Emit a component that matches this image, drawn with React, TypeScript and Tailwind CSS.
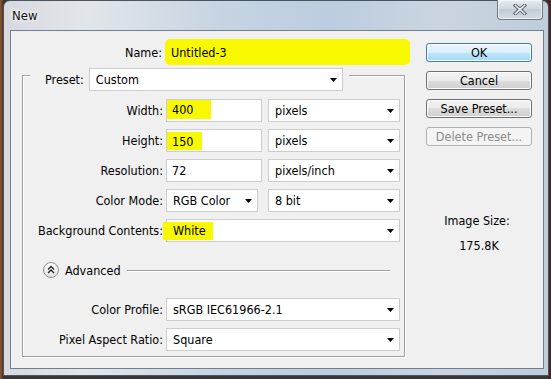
import React from "react";

function Arrow() {
  return (
    <svg width="7" height="4" viewBox="0 0 7 4" className="shrink-0">
      <path d="M0 0H7L3.5 4Z" fill="#000" />
    </svg>
  );
}

function Select({ w, children }: { w: string; children: React.ReactNode }) {
  return (
    <div className={`flex h-[23px] items-center justify-between border border-[#cdcdcd] bg-white pl-[6px] pr-[5px] ${w}`}>
      <span className="flex items-center">{children}</span>
      <Arrow />
    </div>
  );
}

function Row({ label, children }: { label: string; children: React.ReactNode }) {
  return (
    <div className="flex h-[23px] items-center">
      <div className="w-[140px] text-right">{label}</div>
      <div className="ml-[3px] flex items-center">{children}</div>
    </div>
  );
}

function Btn({ children, kind }: { children: React.ReactNode; kind?: "default" | "disabled" }) {
  if (kind === "default")
    return (
      <div className="flex h-[19px] items-center justify-center rounded-[3px] border border-[#3c7fb1] bg-[linear-gradient(#eaf6fd_0%,#d9f0fc_50%,#bee6fd_50%,#a7d9f5_100%)] shadow-[inset_0_0_0_1px_#fbfdfe]">
        {children}
      </div>
    );
  if (kind === "disabled")
    return (
      <div className="flex h-[19px] items-center justify-center rounded-[3px] border border-[#adb2b5] bg-[#f4f4f4] text-[#8b8b8b]">
        {children}
      </div>
    );
  return (
    <div className="flex h-[19px] items-center justify-center rounded-[3px] border border-[#707070] bg-[linear-gradient(#f2f2f2_0%,#ebebeb_50%,#dddddd_50%,#cfcfcf_100%)] shadow-[inset_0_0_0_1px_#fcfcfc]">
      {children}
    </div>
  );
}

export default function App() {
  return (
    <div className="h-[379px] w-[551px] overflow-hidden bg-[linear-gradient(90deg,#8d5a32_0px,#5a3020_3px,#3a3636_3px,#3a3636_548px,#4a2222_548px)] font-['DejaVu_Sans_Condensed','DejaVu_Sans',sans-serif] text-[12.5px] leading-[15px] text-black">
      {/* window */}
      <div className="ml-[3px] flex h-[376px] w-[546px] flex-col rounded-t-[7px] border border-[#4a5560] bg-[linear-gradient(90deg,#d6dadf_0%,#e2e6ea_15%,#c6d4e2_40%,#bccddf_60%,#cad5e0_80%,#bfccda_100%)]">
        {/* title bar */}
        <div className="flex h-[29px] items-start justify-between">
          <span className="pl-[8px] pt-[7px] text-[13px] text-[#111] [text-shadow:0_0_6px_#fff,0_0_3px_#fff]">New</span>
          <div className="-mt-px mr-[5px] flex h-[20px] w-[46px] items-center justify-center rounded-b-[4px] border border-t-0 border-[#6e7a86] bg-[linear-gradient(#e8ecf0,#cdd5de_50%,#c2ccd7_50%,#d4dbe3)] shadow-[inset_0_0_0_1px_rgba(255,255,255,0.6)]">
            <svg width="14" height="11" viewBox="0 0 14 11">
              <path d="M2.5 1.5L11.5 9.5M11.5 1.5L2.5 9.5" stroke="#59636e" strokeWidth="3.6" strokeLinecap="square" />
              <path d="M2.5 1.5L11.5 9.5M11.5 1.5L2.5 9.5" stroke="#eef1f4" strokeWidth="1.6" strokeLinecap="square" />
            </svg>
          </div>
        </div>

        {/* client */}
        <div className="ml-[6px] flex h-[339px] w-[534px] border border-[#6f7f92] bg-[#f0f0f0]">
          {/* left column */}
          <div className="flex w-[394px] shrink-0 flex-col pl-[11px]">
            {/* Name row */}
            <div className="mt-[8px] flex h-[26px] items-center">
              <div className="w-[140px] shrink-0 text-right">Name:</div>
              <div className="ml-[3px] flex h-[26px] w-[245px] shrink-0 items-center rounded-[5px] bg-[#f8f800] pl-[6px]">Untitled-3</div>
            </div>

            {/* group box */}
            <div className="mt-[10px] flex h-[282px] w-[383px] flex-col border border-[#a0a0a0] shadow-[inset_1px_1px_0_#fff,1px_1px_0_#fff]">
              <div className="-mt-[8px] ml-[7px] flex h-[23px] w-fit items-center gap-[5px] bg-[#f0f0f0] pl-[15px] pr-[6px]">
                <span>Preset:</span>
                <Select w="w-[254px]">Custom</Select>
              </div>

              <div className="mt-[8px] flex flex-col gap-[7px]">
                <Row label="Width:">
                  <div className="flex h-[23px] w-[96px] items-start border border-[#cdcdcd] bg-white">
                    <div className="flex h-[19px] w-[44px] items-center bg-[#f8f800] pl-[5px]">400</div>
                  </div>
                  <div className="ml-[6px]">
                    <Select w="w-[132px]">pixels</Select>
                  </div>
                </Row>
                <Row label="Height:">
                  <div className="flex h-[23px] w-[96px] items-end border border-[#cdcdcd] bg-white">
                    <div className="mb-px flex h-[18px] w-[35px] items-center bg-[#f8f800] pl-[5px]">150</div>
                  </div>
                  <div className="ml-[6px]">
                    <Select w="w-[132px]">pixels</Select>
                  </div>
                </Row>
                <Row label="Resolution:">
                  <div className="flex h-[23px] w-[96px] items-center border border-[#cdcdcd] bg-white pl-[5px]">72</div>
                  <div className="ml-[6px]">
                    <Select w="w-[132px]">pixels/inch</Select>
                  </div>
                </Row>
                <Row label="Color Mode:">
                  <Select w="w-[92px]">RGB Color</Select>
                  <div className="ml-[10px]">
                    <Select w="w-[132px]">8 bit</Select>
                  </div>
                </Row>
                <Row label="Background Contents:">
                  <div className="flex h-[23px] w-[234px] items-center justify-between border border-[#cdcdcd] bg-white pr-[5px]">
                    <div className="-ml-[4px] flex h-[18px] w-[50px] items-center bg-[#f8f800] pl-[10px]">White</div>
                    <Arrow />
                  </div>
                </Row>
              </div>

              {/* Advanced */}
              <div className="mt-[20px] flex h-[16px] items-center pl-[20px] pr-[14px]">
                <svg width="16" height="16" viewBox="0 0 16 16" className="shrink-0">
                  <defs>
                    <linearGradient id="adv" x1="0" y1="0" x2="0" y2="1">
                      <stop offset="0" stopColor="#ffffff" />
                      <stop offset="1" stopColor="#e2e2e2" />
                    </linearGradient>
                  </defs>
                  <circle cx="8" cy="8" r="7.5" fill="url(#adv)" stroke="#8e8e8e" />
                  <path d="M5 7.5L8 4.5L11 7.5M5 11L8 8L11 11" fill="none" stroke="#222" strokeWidth="1.3" />
                </svg>
                <span className="ml-[6px]">Advanced</span>
                <div className="ml-[6px] h-px flex-1 bg-[#a0a0a0] shadow-[0_1px_0_#fff]" />
              </div>

              <div className="mt-[20px] flex flex-col gap-[7px]">
                <Row label="Color Profile:">
                  <Select w="w-[234px]">sRGB IEC61966-2.1</Select>
                </Row>
                <Row label="Pixel Aspect Ratio:">
                  <Select w="w-[234px]">Square</Select>
                </Row>
              </div>
            </div>
          </div>

          {/* right column */}
          <div className="ml-[21px] mt-[12px] flex w-[106px] flex-col">
            <div className="flex flex-col gap-[9px]">
              <Btn kind="default">OK</Btn>
              <Btn>Cancel</Btn>
              <Btn>Save Preset...</Btn>
              <Btn kind="disabled">Delete Preset...</Btn>
            </div>
            <div className="mt-[67px] pr-[4px] text-center">Image Size:</div>
            <div className="mt-[10px] text-center">175.8K</div>
          </div>
        </div>
      </div>
    </div>
  );
}
